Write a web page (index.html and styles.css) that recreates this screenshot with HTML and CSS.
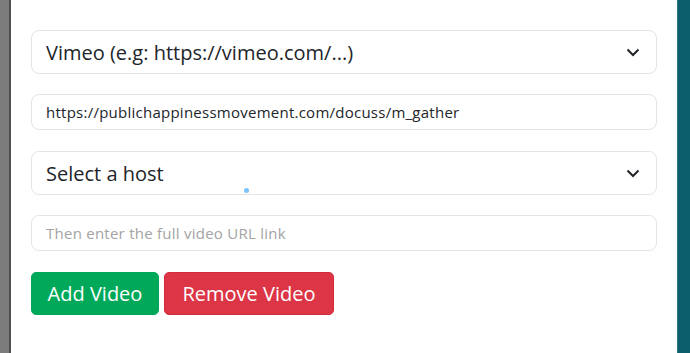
FILE: index.html
```html
<!DOCTYPE html>
<html lang="en">
<head>
    <meta charset="UTF-8">
    <title>Add Video</title>
    <link rel="stylesheet" href="styles.css">
</head>
<body>
    <div class="page">
        <div class="backdrop"></div>
        <section class="modal">
            <div class="field select-wrap">
                <select class="control control-lg">
                    <option>Vimeo (e.g: https://vimeo.com/...)</option>
                </select>
                <svg class="chevron" width="14" height="9" viewBox="0 0 14 9"><path d="M1.5 1.5 L7 7 L12.5 1.5" fill="none" stroke="#212529" stroke-width="2"/></svg>
            </div>
            <div class="field field-input">
                <input class="control" type="text" value="https://publichappinessmovement.com/docuss/m_gather">
            </div>
            <div class="field select-wrap">
                <select class="control control-lg">
                    <option>Select a host</option>
                </select>
                <svg class="chevron" width="14" height="9" viewBox="0 0 14 9"><path d="M1.5 1.5 L7 7 L12.5 1.5" fill="none" stroke="#212529" stroke-width="2"/></svg>
                <span class="dot"></span>
            </div>
            <div class="field field-input">
                <input class="control" type="text" placeholder="Then enter the full video URL link">
            </div>
            <div class="actions">
                <button class="btn btn-add">Add Video</button>
                <button class="btn btn-remove">Remove Video</button>
            </div>
        </section>
        <div class="side"></div>
    </div>
</body>
</html>
```
FILE: styles.css
```css
*{
    margin: 0;
    padding: 0;
    box-sizing: border-box;
}
body{
    font-family: "Open Sans", "Noto Sans", sans-serif;
    background: #fff;
}
.page{
    display: flex;
    height: 353px;
}
.backdrop{
    width: 11px;
    background: #7c7c7c;
    border-right: 2px solid #4f4f4f;
}
.modal{
    flex: 1;
    background: #fff;
    padding: 30px 20px 0 20px;
}
.side{
    width: 13px;
    background: #0c5e6d;
    border-left: 1px solid #2d7683;
}
.field{
    margin-bottom: 20px;
}
.field-input{
    margin-bottom: 21px;
}
.select-wrap{
    position: relative;
}
.control{
    display: block;
    width: 100%;
    height: 36px;
    border: 1px solid #e4e4e6;
    border-radius: 8px;
    background: #fff;
    padding: 0 14px;
    font-family: inherit;
    font-size: 15px;
    letter-spacing: 0.25px;
    color: #212529;
    outline: none;
}
.control::placeholder{
    color: #a3a3a3;
}
.control-lg{
    height: 44px;
    font-size: 20px;
    letter-spacing: 0;
    -webkit-appearance: none;
    appearance: none;
}
.chevron{
    position: absolute;
    right: 17px;
    top: 18px;
}
.dot{
    position: absolute;
    left: 213px;
    top: 37px;
    width: 5px;
    height: 5px;
    border-radius: 50%;
    background: #7cc2fb;
}
.actions{
    display: flex;
    gap: 5px;
}
.btn{
    height: 43px;
    padding: 0 14px;
    border-radius: 5px;
    font-family: inherit;
    font-size: 20px;
    color: #fff;
    cursor: pointer;
}
.btn-add{
    width: 128px;
    background: #00a95a;
    border: 1px solid #00a95a;
}
.btn-remove{
    width: 170px;
    background: #dc3545;
    border: 1px solid #d12b3c;
}
```
